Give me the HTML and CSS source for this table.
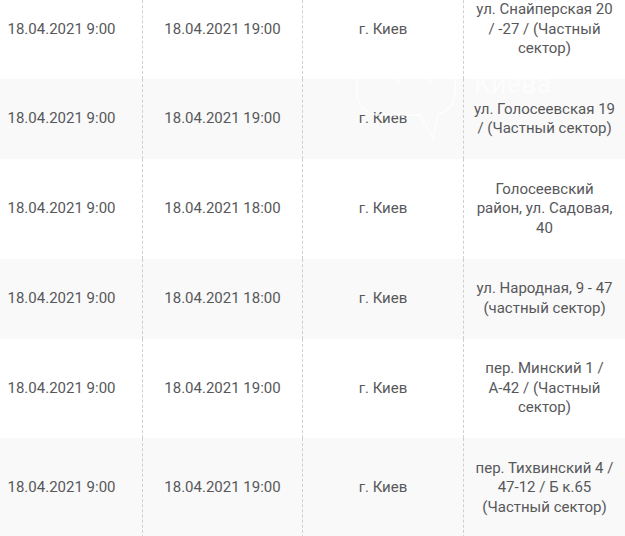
FILE: index.html
```html
<!DOCTYPE html>
<html lang="ru">
<head>
<meta charset="utf-8">
<title>Отключения</title>
<link rel="stylesheet" href="styles.css">
</head>
<body>
<div class="wrap">
  <table class="schedule">
    <colgroup>
      <col class="c1"><col class="c2"><col class="c3"><col class="c4">
    </colgroup>
    <tbody>
      <tr><td>18.04.2021 9:00</td><td>18.04.2021 19:00</td><td>г. Киев</td><td>ул. Снайперская 20 / -27 / (Частный сектор)</td></tr>
      <tr><td>18.04.2021 9:00</td><td>18.04.2021 19:00</td><td>г. Киев</td><td>ул. Голосеевская 19 / (Частный сектор)</td></tr>
      <tr><td>18.04.2021 9:00</td><td>18.04.2021 18:00</td><td>г. Киев</td><td>Голосеевский район, ул. Садовая, 40</td></tr>
      <tr><td>18.04.2021 9:00</td><td>18.04.2021 18:00</td><td>г. Киев</td><td>ул. Народная, 9 - 47 (частный сектор)</td></tr>
      <tr><td>18.04.2021 9:00</td><td>18.04.2021 19:00</td><td>г. Киев</td><td>пер. Минский 1 / А-42 / (Частный сектор)</td></tr>
      <tr><td>18.04.2021 9:00</td><td>18.04.2021 19:00</td><td>г. Киев</td><td>пер. Тихвинский 4 / 47-12 / Б к.65 (Частный сектор)</td></tr>
    </tbody>
  </table>
  <svg class="watermark" width="625" height="160" viewBox="0 0 625 160" aria-hidden="true">
    <g fill="none" stroke="#ffffff" stroke-width="2">
      <path d="M357 20 V92 Q357 113 380 115 H420 L433 138 L438 114 Q455 110 455 90 V20"/>
      <path d="M398 70 V83"/>
      <path d="M430 70 V83"/>
    </g>
    <text x="474" y="93" class="wm-text">Киева</text>
  </svg>
</div>
</body>
</html>
```

FILE: styles.css
```css
html, body {
  margin: 0;
  padding: 0;
  background: #ffffff;
  overflow: hidden;
}

.wrap {
  position: relative;
  width: 625px;
  height: 536px;
  overflow: hidden;
}

.schedule {
  table-layout: fixed;
  border-collapse: separate;
  border-spacing: 0;
  width: 644px;
  margin-left: -19px;
  margin-top: -20.5px;
  font-family: Roboto, "Noto Sans", sans-serif;
  font-size: 15px;
  line-height: 19.5px;
  color: #57585a;
}

.c1 { width: 162px; }
.c2 { width: 160px; }
.c3 { width: 161px; }
.c4 { width: 161px; }

.schedule td {
  padding: 20.5px 8px;
  text-align: center;
  vertical-align: middle;
  border-right: 1px dashed #cfcfcf;
}

.schedule td:last-child {
  border-right: none;
}

.schedule tr:nth-child(even) td {
  background: #f9f9f9;
}

.watermark {
  position: absolute;
  left: 0;
  top: 0;
  opacity: 0.7;
  pointer-events: none;
}

.wm-text {
  font-family: Roboto, sans-serif;
  font-size: 27px;
  fill: #ffffff;
}
```
